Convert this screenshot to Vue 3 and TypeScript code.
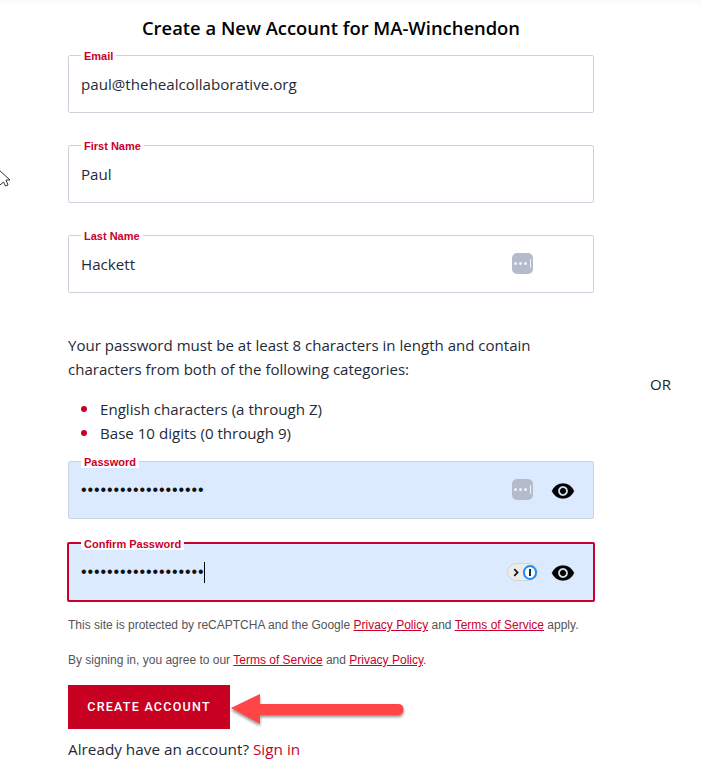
<script setup lang="ts">
// Sign-up form for a community site, with the annotation arrow from the help doc.
interface Field {
  label: string;
  value: string;
  filler?: boolean;
}

const nameFields: Field[] = [
  { label: 'Email', value: 'paul@thehealcollaborative.org' },
  { label: 'First Name', value: 'Paul' },
  { label: 'Last Name', value: 'Hackett', filler: true },
];

const dots = '•'.repeat(19);
</script>

<template>
  <div class="page">
    <main class="form">
      <h1 class="title">Create a New Account for MA-Winchendon</h1>

      <div v-for="f in nameFields" :key="f.label" class="field">
        <span class="field-label">{{ f.label }}</span>
        <span class="field-value">{{ f.value }}</span>
        <span v-if="f.filler" class="pw-icon"><i></i><i></i><i></i><b></b></span>
      </div>

      <p class="rules">
        Your password must be at least 8 characters in length and contain characters from both of
        the following categories:
      </p>
      <ul class="rule-list">
        <li>English characters (a through Z)</li>
        <li>Base 10 digits (0 through 9)</li>
      </ul>

      <div class="field field--filled field--pw">
        <span class="field-label">Password</span>
        <span class="field-value dots">{{ dots }}</span>
        <span class="pw-icon"><i></i><i></i><i></i><b></b></span>
        <svg class="eye" viewBox="0 0 24 24" width="24" height="24">
          <path d="M12 4.5C7 4.5 2.73 7.61 1 12c1.73 4.39 6 7.5 11 7.5s9.27-3.11 11-7.5c-1.73-4.39-6-7.5-11-7.5zM12 17c-2.76 0-5-2.24-5-5s2.24-5 5-5 5 2.24 5 5-2.24 5-5 5zm0-8c-1.66 0-3 1.34-3 3s1.34 3 3 3 3-1.34 3-3-1.34-3-3-3z" />
        </svg>
      </div>

      <div class="field field--filled field--focus">
        <span class="field-label">Confirm Password</span>
        <span class="field-value dots">{{ dots }}<span class="caret"></span></span>
        <span class="op-badge">
          <svg viewBox="0 0 8 10" width="7" height="9">
            <path d="M1.5 1 5.5 5 1.5 9" fill="none" stroke="#111" stroke-width="2" />
          </svg>
          <span class="op-ring"><span class="op-bar"></span></span>
        </span>
        <svg class="eye" viewBox="0 0 24 24" width="24" height="24">
          <path d="M12 4.5C7 4.5 2.73 7.61 1 12c1.73 4.39 6 7.5 11 7.5s9.27-3.11 11-7.5c-1.73-4.39-6-7.5-11-7.5zM12 17c-2.76 0-5-2.24-5-5s2.24-5 5-5 5 2.24 5 5-2.24 5-5 5zm0-8c-1.66 0-3 1.34-3 3s1.34 3 3 3 3-1.34 3-3-1.34-3-3-3z" />
        </svg>
      </div>

      <p class="legal">
        This site is protected by reCAPTCHA and the Google <a href="#">Privacy Policy</a> and
        <a href="#">Terms of Service</a> apply.
      </p>
      <p class="legal legal--second">
        By signing in, you agree to our <a href="#">Terms of Service</a> and
        <a href="#">Privacy Policy</a>.
      </p>

      <div class="submit-row">
        <button type="button" class="submit">CREATE ACCOUNT</button>
        <svg class="arrow" viewBox="0 0 180 46" width="180" height="46">
          <defs>
            <filter id="arrow-shadow" x="-10%" y="-30%" width="120%" height="170%">
              <feDropShadow dx="0" dy="2" stdDeviation="1.5" flood-color="#000" flood-opacity="0.45" />
            </filter>
          </defs>
          <path
            d="M1 23 L30 9 L30 19 L168 19 Q173.5 19 173.5 24.5 Q173.5 30 168 30 L30 30 L30 39 Z"
            fill="#ff4444"
            filter="url(#arrow-shadow)"
          />
        </svg>
      </div>

      <p class="signin">Already have an account? <a href="#">Sign in</a></p>
    </main>

    <div class="or">OR</div>

    <svg class="cursor" viewBox="0 0 12 20" width="12" height="20">
      <path d="M-2 1 L10 12 L6 12 L8 17 L5.5 18 L3.5 14 L0 17" fill="#fff" stroke="#333" stroke-width="1" />
    </svg>
  </div>
</template>

<style>
html,
body {
  margin: 0;
  background: #fff;
}
</style>

<style scoped>
.page {
  position: relative;
  display: flex;
  align-items: center;
  width: 702px;
  height: 776px;
  overflow: hidden;
  box-sizing: border-box;
  padding-left: 68px;
  background: linear-gradient(#fafafa, #fff 6px);
  font-family: "Open Sans", "Noto Sans", sans-serif;
  color: #1f2a37;
}

.form {
  width: 526px;
  align-self: flex-start;
}

.title {
  margin: 16px 0 15px;
  font-size: 18.4px;
  line-height: 24px;
  font-weight: 600;
  color: #000;
  text-align: center;
}

.field {
  position: relative;
  display: flex;
  align-items: center;
  box-sizing: border-box;
  height: 58px;
  margin-bottom: 32px;
  padding: 0 12px;
  border: 1px solid #ccd2dc;
  border-radius: 2px;
  background: #fff;
}

.field-label {
  position: absolute;
  top: -6px;
  left: 12px;
  padding: 0 3px;
  background: #fff;
  font-family: "Liberation Sans", Arial, sans-serif;
  font-size: 11px;
  line-height: 12px;
  font-weight: 700;
  color: #c8002b;
}

.field-value {
  font-size: 15.15px;
  line-height: 24px;
}

.dots {
  display: flex;
  align-items: center;
  font-family: "Liberation Sans", Arial, sans-serif;
  font-size: 16px;
  letter-spacing: 0.9px;
  color: #111;
}

.caret {
  width: 1px;
  height: 21px;
  margin-left: -1px;
  background: #000;
}

.field--filled {
  background: #dbeafe;
}

.field--pw {
  margin-bottom: 23px;
}

.field--focus {
  width: 528px;
  height: 60px;
  margin-left: -1px;
  margin-bottom: 15px;
  border: 2px solid #c8002b;
  padding: 0 12px;
}

.pw-icon {
  position: absolute;
  top: 17px;
  left: 443px;
  display: flex;
  align-items: center;
  justify-content: center;
  gap: 2px;
  width: 21px;
  height: 21px;
  border-radius: 5px;
  background: #b4bccb;
}

.pw-icon i {
  width: 3px;
  height: 3px;
  border-radius: 50%;
  background: #f1f3f7;
}

.pw-icon b {
  width: 1px;
  height: 9px;
  margin-left: 1px;
  background: #f1f3f7;
}

.eye {
  position: absolute;
  top: 17px;
  left: 482px;
  fill: #000;
  stroke: #000;
  stroke-width: 0.3;
}

.op-badge {
  position: absolute;
  top: 19px;
  left: 438px;
  display: flex;
  align-items: center;
  gap: 3px;
  box-sizing: border-box;
  width: 31px;
  height: 18px;
  padding-left: 5px;
  border: 1px solid #d4d4d4;
  border-radius: 9px;
  background: #ececec;
}

.op-ring {
  display: flex;
  align-items: center;
  justify-content: center;
  box-sizing: border-box;
  width: 15px;
  height: 15px;
  border: 2.5px solid #1a8cff;
  border-radius: 50%;
  background: #fff;
}

.op-bar {
  width: 2px;
  height: 7px;
  background: #1a2a44;
}

.rules {
  margin: 40px 0 0;
  font-size: 15.05px;
  line-height: 24px;
}

.rule-list {
  margin: 16px 0 16px;
  padding: 0 0 0 32px;
  list-style: none;
  font-size: 15.1px;
  line-height: 24px;
}

.rule-list li {
  position: relative;
}

.rule-list li::before {
  content: "";
  position: absolute;
  top: 9px;
  left: -19px;
  width: 6px;
  height: 6px;
  border-radius: 50%;
  background: #c8002b;
}

.legal {
  margin: 0;
  font-family: "Liberation Sans", Arial, sans-serif;
  font-size: 12px;
  line-height: 16px;
  color: #555;
}

.legal a {
  color: #c8002b;
}

.legal--second {
  margin-top: 19px;
}

.submit-row {
  position: relative;
  margin-top: 17px;
}

.submit {
  display: block;
  width: 162px;
  height: 44px;
  padding: 0 0 2px;
  border: 0;
  background: #c80021;
  color: #fff;
  font-family: Roboto, sans-serif;
  font-size: 12.5px;
  font-weight: 500;
  letter-spacing: 1.25px;
}

.arrow {
  position: absolute;
  top: 0;
  left: 162px;
}

.signin {
  margin: 8px 0 0;
  font-size: 15.3px;
  line-height: 24px;
}

.signin a {
  color: #c8002b;
  text-decoration: none;
}

.or {
  position: absolute;
  top: 375px;
  left: 650px;
  font-size: 15px;
  line-height: 18px;
  color: #222;
}

.cursor {
  position: absolute;
  top: 168px;
  left: 0;
}
</style>
